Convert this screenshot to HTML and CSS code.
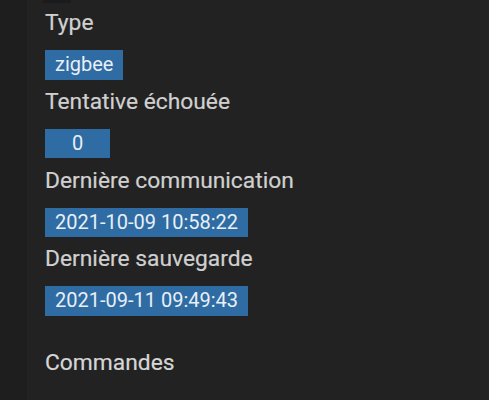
FILE: index.html
```html
<!DOCTYPE html>
<html lang="fr">
<head>
<meta charset="utf-8">
<link rel="stylesheet" href="styles.css">
</head>
<body>
<div class="page">
  <div class="gutter"></div>
  <main class="panel">
    <div class="topmark"></div>
    <div class="field">
      <div class="label">Type</div>
      <span class="badge">zigbee</span>
    </div>
    <div class="field">
      <div class="label">Tentative échouée</div>
      <span class="badge badge-num">0</span>
    </div>
    <div class="field">
      <div class="label">Dernière communication</div>
      <span class="badge">2021-10-09 10:58:22</span>
    </div>
    <div class="field">
      <div class="label">Dernière sauvegarde</div>
      <span class="badge">2021-09-11 09:49:43</span>
    </div>
    <div class="section">Commandes</div>
  </main>
</div>
</body>
</html>
```

FILE: styles.css
```css
html, body {
  margin: 0;
  padding: 0;
  background: #222222;
}
body {
  font-family: Roboto, "Noto Sans", sans-serif;
  width: 489px;
  height: 400px;
  overflow: hidden;
}
.page {
  display: flex;
  height: 400px;
}
.gutter {
  width: 27px;
  flex: none;
  background: #1e1e1e;
}
.panel {
  flex: 1;
  position: relative;
  background: #222222;
  padding: 9px 0 0 18px;
  display: flex;
  flex-direction: column;
  align-items: flex-start;
}
.topmark {
  position: absolute;
  left: 16px;
  top: 0;
  width: 28px;
  height: 3px;
  background: #1b1b1b;
}
.field {
  display: flex;
  flex-direction: column;
  align-items: flex-start;
  margin-bottom: 8.3px;
}
.label {
  font-size: 22.8px;
  line-height: 28px;
  color: #d0d0d0;
  margin-bottom: 13px;
  -webkit-text-stroke: 0.2px #d0d0d0;
}
.badge {
  display: inline-block;
  box-sizing: border-box;
  height: 29.5px;
  line-height: 29.5px;
  padding: 0 10px;
  font-size: 20px;
  color: #e9eff6;
  background: #2e6ca3;
  text-align: center;
}
.badge-num {
  min-width: 65px;
}
.section {
  margin-top: 25px;
  font-size: 22.8px;
  line-height: 28px;
  color: #d6d6d6;
  -webkit-text-stroke: 0.2px #d6d6d6;
}
```
